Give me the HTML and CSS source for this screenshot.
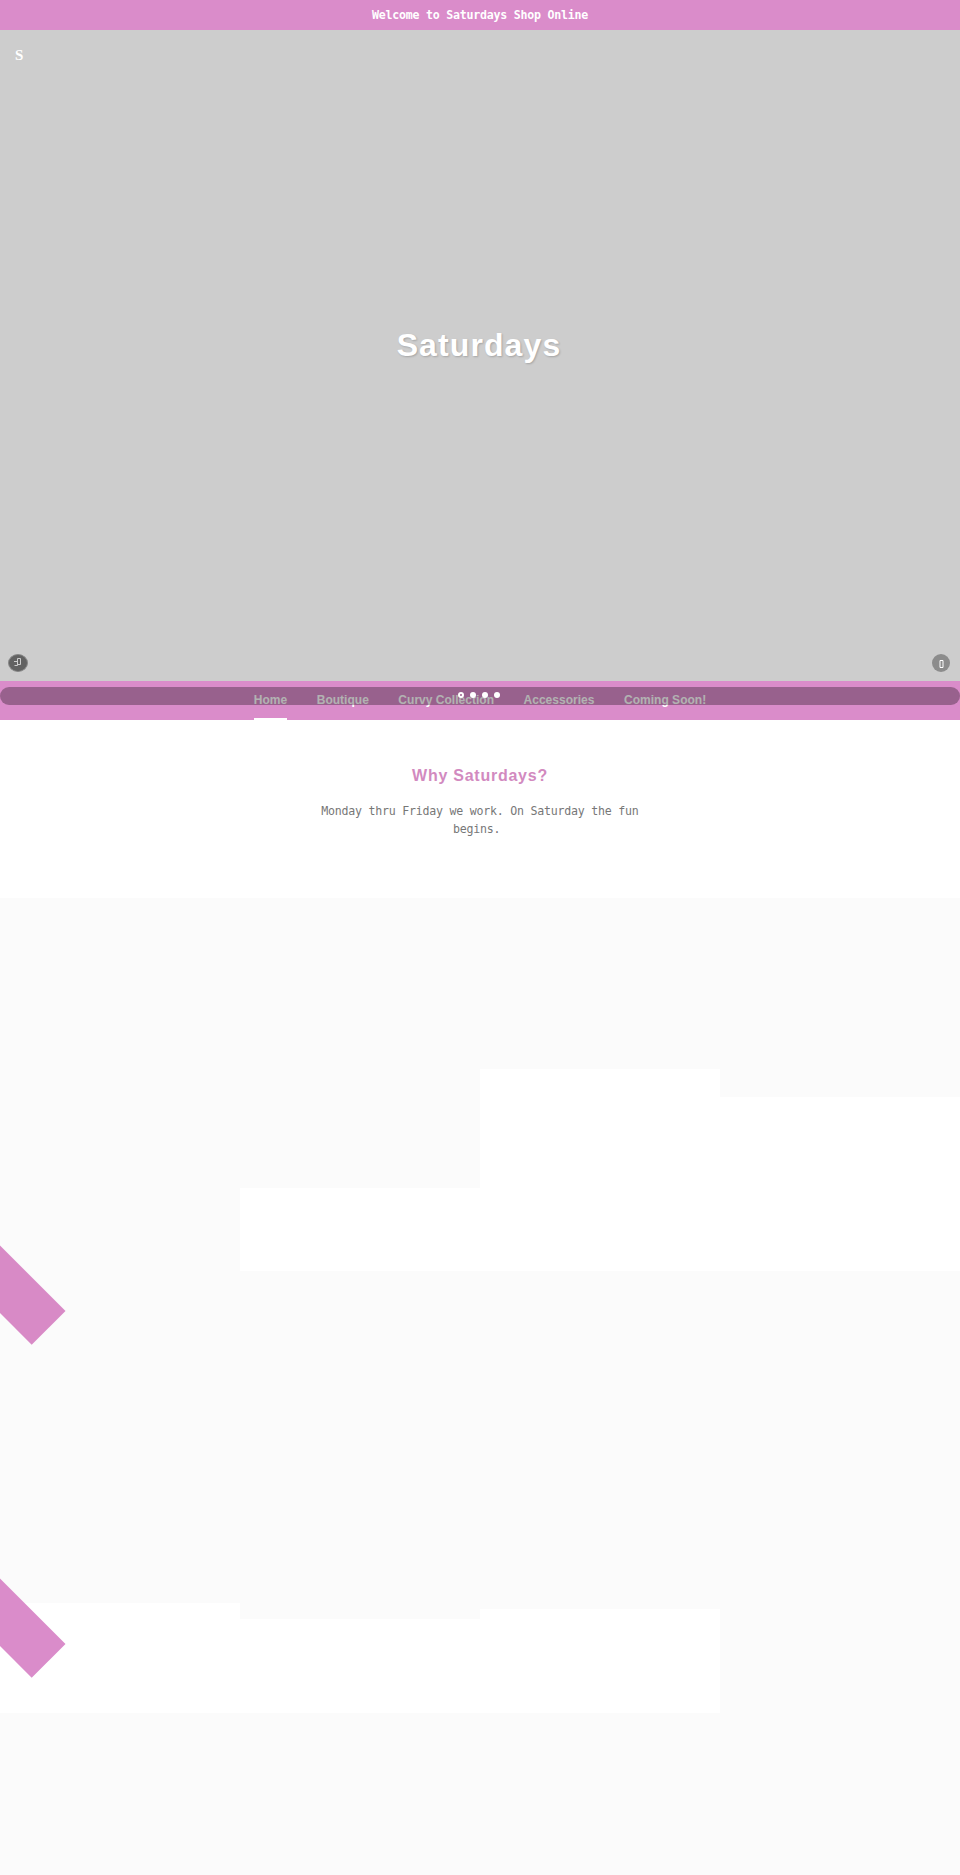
FILE: index.html
```html
<!DOCTYPE html>
<html lang="en">
<head>
<meta charset="utf-8">
<title>Saturdays</title>
<link rel="stylesheet" href="styles.css">
</head>
<body>
<div class="announcement">Welcome to Saturdays Shop Online</div>
<header class="hero">
  <a class="logo">S</a>
  <h1 class="hero-title">Saturdays</h1>
  <div class="hero-controls">
    <button class="round pause" aria-label="Pause"><svg width="10" height="12" viewBox="0 0 10 12"><path d="M4.5 1.5h3v6h-3zM1 4.5h3M1.5 8.5h3v-3" /></svg></button>
    <button class="round next" aria-label="Next"><svg width="5" height="8" viewBox="0 0 5 8"><path d="M1 .5h3v7H1z" /></svg></button>
  </div>
</header>
<nav class="nav">
  <a class="link active">Home</a><a class="link">Boutique</a><a class="link">Curvy Collection</a><a class="link">Accessories</a><a class="link">Coming Soon!</a>
  <div class="slider"><i class="dot current"></i><i class="dot"></i><i class="dot"></i><i class="dot"></i></div>
</nav>
<section class="intro">
  <h2 class="intro-title">Why Saturdays?</h2>
  <p class="intro-text">Monday thru Friday we work. On Saturday the fun begins.&nbsp;</p>
</section>
<main class="grid">
  <div class="tile first"><span class="ribbon"></span></div>
  <div class="tile h-290"></div>
  <div class="tile h-171"></div>
  <div class="tile h-199"></div>
  <div class="tile h-332"><span class="ribbon"></span></div>
  <div class="tile h-348"></div>
  <div class="tile h-338"></div>
  <div class="tile"></div>
  <div class="tile"></div>
  <div class="tile"></div>
  <div class="tile"></div>
  <div class="tile"></div>
</main>
</body>
</html>
```
FILE: styles.css
```css
* { box-sizing: border-box; }
body { margin: 0; background: #fff; font-family: "Liberation Sans", sans-serif; }
.announcement { height: 30px; text-align: center; background: #da8cca; color: #fff; font: bold 11.6px/31px "DejaVu Sans Mono", monospace; letter-spacing: -.23px; }
.hero { height: 651px; background: #cdcdcd; display: grid; grid-template-rows: 48px 1fr 36px; }
.logo { padding: 15px 0 0 15px; color: #fff; font: bold 15px/20px "Liberation Serif", serif; }
.hero-title { margin: 0; align-self: center; padding: 0 2px 34px 0; text-align: center; color: #fff; font-size: 32px; line-height: 40px; letter-spacing: 1.1px; text-shadow: 1px 1px 2px rgba(0,0,0,.2); }
.hero-controls { display: flex; justify-content: space-between; padding: 9px 10px 0 8px; }
.round { display: flex; align-items: center; justify-content: center; width: 18px; height: 18px; padding: 0; border: 0; border-radius: 50%; background: #8c8c8c; }
.round svg { fill: none; stroke: #fff; stroke-width: 1; }
.pause { width: 20px; background: #626262; border: 1px solid #888; }
.pause svg { stroke: #ccc; }
.next { padding: 2px 0 0 1px; }
.nav { position: relative; height: 39px; display: flex; justify-content: center; gap: 29.5px; background: #da8cca; }
.link { height: 39px; padding-top: 10px; color: #fff; font-size: 12px; font-weight: bold; line-height: 18px; letter-spacing: .02px; }
.active { border-bottom: 2px solid #fff; }
.slider { position: absolute; left: 0; right: 0; top: 6px; height: 18px; padding: 0 3px 2px 0; display: flex; align-items: center; justify-content: center; gap: 6px; border-radius: 9px; background: rgba(0,0,0,.3); }
.dot { width: 6px; height: 6px; border-radius: 50%; background: #fff; }
.current { background: transparent; border: 2px solid #fff; }
.intro { height: 178px; padding-top: 44px; text-align: center; }
.intro-title { margin: 0; color: #d28abf; font-size: 16px; line-height: 24px; letter-spacing: .75px; }
.intro-text { width: 330px; margin: 14px auto 0; color: #777; font: 11.6px/18px "DejaVu Sans Mono", monospace; letter-spacing: -.23px; }
.grid { display: grid; grid-template-columns: repeat(4, 1fr); grid-template-rows: 373px 442px 162px; align-items: start; overflow: hidden; height: 977px; }
.tile { position: relative; height: 100%; background: #fbfbfb; }
.h-290 { height: 290px; }
.h-171 { height: 171px; }
.h-199 { height: 199px; }
.h-332 { height: 332px; }
.h-348 { height: 348px; }
.h-338 { height: 338px; }
.first { z-index: 1; }
.ribbon { position: absolute; left: 0; top: 307px; width: 66px; height: 100px; background: #da8cca; clip-path: polygon(0 .5px, 65.5px 66px, 31.7px 99.7px, 0 68px); }
.first .ribbon { top: 347px; background: #d88ac6; }
```
